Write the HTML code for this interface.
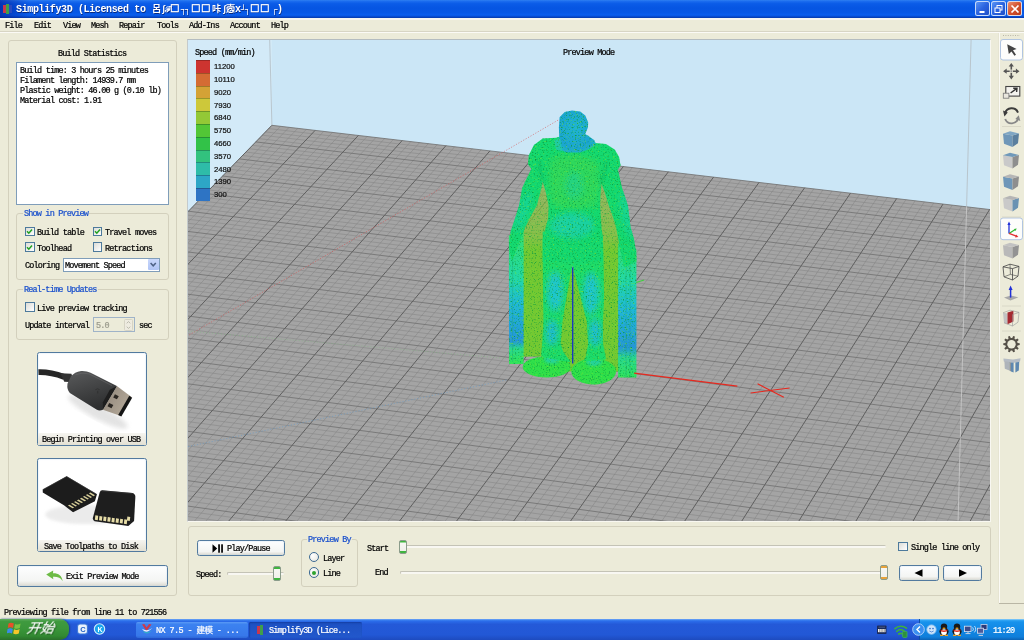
<!DOCTYPE html><html><head><meta charset="utf-8"><title>Simplify3D</title><style>
*{box-sizing:border-box;margin:0;padding:0}
html,body{width:1024px;height:640px;overflow:hidden;background:#ecebd9}
body{position:relative;font-family:"Liberation Mono","Noto Sans CJK SC",monospace;font-size:8.5px;letter-spacing:-0.83px;color:#000;line-height:10px;-webkit-text-stroke:0.22px}
.a{position:absolute}
.t{position:absolute;white-space:pre;height:10px;line-height:10px;will-change:transform}
.b{color:#1a50cc}
.gb{position:absolute;border:1px solid #d3d0bd;border-radius:3px}
.gl{will-change:transform;position:absolute;margin-top:1.2px;white-space:pre;background:#ecebd9;color:#1a50cc;height:10px;line-height:10px;padding:0 1px}
.cb{position:absolute;width:9.6px;height:9.6px;margin-top:-0.8px;border:1px solid #4d7a9c;background:linear-gradient(135deg,#dcdcd7,#fff)}
.btn{position:absolute;border:1px solid #527a9f;border-radius:2.5px;background:linear-gradient(#fdfeff,#f4f5f3 75%,#dcdad0);box-shadow:inset 0 0 1.5px #b9cfe6}
.sans{font-family:"Liberation Sans",sans-serif;letter-spacing:0}
</style></head><body>
<div class="a" style="left:0;top:0;width:1024px;height:18.4px;background:linear-gradient(#2f80f2 0%,#1a6bee 8%,#0b5ce8 20%,#0655e2 45%,#0758e6 70%,#0a5eee 84%,#0747c8 94%,#0538a8 100%)"></div>
<div class="a" style="left:0;top:0;width:30px;height:18.4px;background:linear-gradient(90deg,rgba(0,20,140,.55),rgba(0,20,140,0))"></div>
<svg class="a" style="left:2px;top:3px" width="12" height="12" viewBox="0 0 12 12"><rect x="1" y="2" width="3" height="8" fill="#c8384e"/><rect x="4" y="1" width="3" height="10" fill="#3f9f4a"/><rect x="7" y="2" width="3" height="8" fill="#2a4ac0"/></svg>
<div class="t" style="left:16px;top:4px;height:12px;line-height:12px;font-size:10px;font-weight:bold;letter-spacing:-0.37px;color:#fff;text-shadow:0.5px 0.5px 0 #0a2a80;-webkit-text-stroke:0">Simplify3D (Licensed to</div>
<div class="t" style="left:152.2px;top:4px;height:12px;line-height:12px;font-size:10px;font-weight:bold;letter-spacing:-0.37px;color:#fff;text-shadow:0.5px 0.5px 0 #0a2a80;-webkit-text-stroke:0;font-size:9.2px;letter-spacing:0">呂</div>
<div class="t" style="left:161.2px;top:4px;height:12px;line-height:12px;font-size:10px;font-weight:bold;letter-spacing:-0.37px;color:#fff;text-shadow:0.5px 0.5px 0 #0a2a80;-webkit-text-stroke:0;font-size:9px;letter-spacing:0">ʃ</div>
<div class="t" style="left:164.5px;top:4px;height:12px;line-height:12px;font-size:10px;font-weight:bold;letter-spacing:-0.37px;color:#fff;text-shadow:0.5px 0.5px 0 #0a2a80;-webkit-text-stroke:0;font-size:8px;letter-spacing:0">ℱ</div>
<div class="t" style="left:171.3px;top:4px;height:12px;line-height:12px;font-size:10px;font-weight:bold;letter-spacing:-0.37px;color:#fff;text-shadow:0.5px 0.5px 0 #0a2a80;-webkit-text-stroke:0;font-size:9.2px;letter-spacing:0;font-size:12.4px;margin-top:-0.6px;margin-left:-0.6px;font-weight:normal;-webkit-text-stroke:0.45px #fff">□</div>
<div class="t" style="left:180.6px;top:4px;height:12px;line-height:12px;font-size:10px;font-weight:bold;letter-spacing:-0.37px;color:#fff;text-shadow:0.5px 0.5px 0 #0a2a80;-webkit-text-stroke:0;font-size:9.6px;letter-spacing:0">┐</div>
<div class="t" style="left:185.2px;top:4px;height:12px;line-height:12px;font-size:10px;font-weight:bold;letter-spacing:-0.37px;color:#fff;text-shadow:0.5px 0.5px 0 #0a2a80;-webkit-text-stroke:0;font-size:9.6px;letter-spacing:0">┐</div>
<div class="t" style="left:193px;top:4px;height:12px;line-height:12px;font-size:10px;font-weight:bold;letter-spacing:-0.37px;color:#fff;text-shadow:0.5px 0.5px 0 #0a2a80;-webkit-text-stroke:0;font-size:9.2px;letter-spacing:0;font-size:12.4px;margin-top:-0.6px;margin-left:-0.6px;font-weight:normal;-webkit-text-stroke:0.45px #fff">□</div>
<div class="t" style="left:202.2px;top:4px;height:12px;line-height:12px;font-size:10px;font-weight:bold;letter-spacing:-0.37px;color:#fff;text-shadow:0.5px 0.5px 0 #0a2a80;-webkit-text-stroke:0;font-size:9.2px;letter-spacing:0;font-size:12.4px;margin-top:-0.6px;margin-left:-0.6px;font-weight:normal;-webkit-text-stroke:0.45px #fff">□</div>
<div class="t" style="left:212px;top:4px;height:12px;line-height:12px;font-size:10px;font-weight:bold;letter-spacing:-0.37px;color:#fff;text-shadow:0.5px 0.5px 0 #0a2a80;-webkit-text-stroke:0;font-size:9.2px;letter-spacing:0">咔</div>
<div class="t" style="left:221.6px;top:4px;height:12px;line-height:12px;font-size:10px;font-weight:bold;letter-spacing:-0.37px;color:#fff;text-shadow:0.5px 0.5px 0 #0a2a80;-webkit-text-stroke:0;font-size:9px;letter-spacing:0">ʃ</div>
<div class="t" style="left:225.6px;top:4px;height:12px;line-height:12px;font-size:10px;font-weight:bold;letter-spacing:-0.37px;color:#fff;text-shadow:0.5px 0.5px 0 #0a2a80;-webkit-text-stroke:0;font-size:9.2px;letter-spacing:0">悫</div>
<div class="t" style="left:234.8px;top:4px;height:12px;line-height:12px;font-size:10px;font-weight:bold;letter-spacing:-0.37px;color:#fff;text-shadow:0.5px 0.5px 0 #0a2a80;-webkit-text-stroke:0;font-size:10px;letter-spacing:0">x</div>
<div class="t" style="left:240.8px;top:4px;height:12px;line-height:12px;font-size:10px;font-weight:bold;letter-spacing:-0.37px;color:#fff;text-shadow:0.5px 0.5px 0 #0a2a80;-webkit-text-stroke:0;font-size:9.6px;letter-spacing:0">┘</div>
<div class="t" style="left:245.4px;top:4px;height:12px;line-height:12px;font-size:10px;font-weight:bold;letter-spacing:-0.37px;color:#fff;text-shadow:0.5px 0.5px 0 #0a2a80;-webkit-text-stroke:0;font-size:9.6px;letter-spacing:0">┐</div>
<div class="t" style="left:252px;top:4px;height:12px;line-height:12px;font-size:10px;font-weight:bold;letter-spacing:-0.37px;color:#fff;text-shadow:0.5px 0.5px 0 #0a2a80;-webkit-text-stroke:0;font-size:9.2px;letter-spacing:0;font-size:12.4px;margin-top:-0.6px;margin-left:-0.6px;font-weight:normal;-webkit-text-stroke:0.45px #fff">□</div>
<div class="t" style="left:261.2px;top:4px;height:12px;line-height:12px;font-size:10px;font-weight:bold;letter-spacing:-0.37px;color:#fff;text-shadow:0.5px 0.5px 0 #0a2a80;-webkit-text-stroke:0;font-size:9.2px;letter-spacing:0;font-size:12.4px;margin-top:-0.6px;margin-left:-0.6px;font-weight:normal;-webkit-text-stroke:0.45px #fff">□</div>
<div class="t" style="left:271.6px;top:4px;height:12px;line-height:12px;font-size:10px;font-weight:bold;letter-spacing:-0.37px;color:#fff;text-shadow:0.5px 0.5px 0 #0a2a80;-webkit-text-stroke:0;font-size:9.6px;letter-spacing:0">┌</div>
<div class="t" style="left:277px;top:4px;height:12px;line-height:12px;font-size:10px;font-weight:bold;letter-spacing:-0.37px;color:#fff;text-shadow:0.5px 0.5px 0 #0a2a80;-webkit-text-stroke:0;font-size:10px;letter-spacing:0">)</div>
<div class="a" style="left:975.2px;top:1.4px;width:14.8px;height:15px;border:1px solid rgba(225,238,255,.85);border-radius:2.5px;background:linear-gradient(135deg,#5b95f5,#2a63df 50%,#1e4ec8)"></div>
<div class="a" style="left:991.2px;top:1.4px;width:14.8px;height:15px;border:1px solid rgba(225,238,255,.85);border-radius:2.5px;background:linear-gradient(135deg,#5b95f5,#2a63df 50%,#1e4ec8)"></div>
<div class="a" style="left:1007.2px;top:1.4px;width:14.8px;height:15px;border:1px solid rgba(225,238,255,.85);border-radius:2.5px;background:linear-gradient(135deg,#ea9072,#d4522e 50%,#b83c1c)"></div>
<svg class="a" style="left:975.6px;top:1.9px" width="46" height="14" viewBox="0 0 46 14"><rect x="3.5" y="9" width="5" height="2" fill="#fff"/><rect x="21" y="3.5" width="5" height="4.5" fill="none" stroke="#fff" stroke-width="1"/><rect x="19" y="6" width="5" height="4.5" fill="#2a63df" stroke="#fff" stroke-width="1"/><path d="M35.5 3.5 L42.5 10.5 M42.5 3.5 L35.5 10.5" stroke="#fff" stroke-width="1.7"/></svg>
<div class="a" style="left:0;top:18.4px;width:1024px;height:1.2px;background:#f7f6ef"></div>
<div class="t " style="left:5px;top:21.1px;">File</div>
<div class="t " style="left:34px;top:21.1px;">Edit</div>
<div class="t " style="left:62.5px;top:21.1px;">View</div>
<div class="t " style="left:91px;top:21.1px;">Mesh</div>
<div class="t " style="left:119px;top:21.1px;">Repair</div>
<div class="t " style="left:156.5px;top:21.1px;">Tools</div>
<div class="t " style="left:189px;top:21.1px;">Add-Ins</div>
<div class="t " style="left:230px;top:21.1px;">Account</div>
<div class="t " style="left:271px;top:21.1px;">Help</div>
<div class="a" style="left:0;top:31px;width:1024px;height:1px;background:#d8d5c4"></div>
<div class="a" style="left:0;top:32px;width:1024px;height:1px;background:#fbfaf5"></div>
<div class="gb" style="left:8.4px;top:40px;width:168.8px;height:556px"></div>
<div class="t " style="left:58px;top:48.9px;">Build Statistics</div>
<div class="a" style="left:15.9px;top:62px;width:152.7px;height:142.5px;background:#fff;border:1px solid #7f9db9"></div>
<div class="t " style="left:19.5px;top:66.2px;">Build time: 3 hours 25 minutes</div>
<div class="t " style="left:19.5px;top:76.2px;">Filament length: 14939.7 mm</div>
<div class="t " style="left:19.5px;top:86.2px;">Plastic weight: 46.00 g (0.10 lb)</div>
<div class="t " style="left:19.5px;top:96.2px;">Material cost: 1.91</div>
<div class="gb" style="left:16.3px;top:213px;width:153.2px;height:67px"></div>
<div class="gl" style="left:23px;top:208px">Show in Preview</div>
<div class="cb" style="left:25px;top:227.5px"></div>
<svg class="a" style="left:25.3px;top:227.0px" width="9" height="9" viewBox="0 0 9 9"><path d="M2 4.2 L3.8 6.2 L7 2.4" fill="none" stroke="#21a121" stroke-width="1.5"/></svg>
<div class="t " style="left:37.3px;top:228.1px;">Build table</div>
<div class="cb" style="left:92.5px;top:227.5px"></div>
<svg class="a" style="left:92.8px;top:227.0px" width="9" height="9" viewBox="0 0 9 9"><path d="M2 4.2 L3.8 6.2 L7 2.4" fill="none" stroke="#21a121" stroke-width="1.5"/></svg>
<div class="t " style="left:104.8px;top:228.1px;">Travel moves</div>
<div class="cb" style="left:25px;top:243px"></div>
<svg class="a" style="left:25.3px;top:242.5px" width="9" height="9" viewBox="0 0 9 9"><path d="M2 4.2 L3.8 6.2 L7 2.4" fill="none" stroke="#21a121" stroke-width="1.5"/></svg>
<div class="t " style="left:37.3px;top:243.6px;">Toolhead</div>
<div class="cb" style="left:92.5px;top:243px"></div>
<div class="t " style="left:104.8px;top:243.6px;">Retractions</div>
<div class="t " style="left:25px;top:261.1px;">Coloring</div>
<div class="a" style="left:63px;top:257.5px;width:96.6px;height:14.2px;background:#fff;border:1px solid #7f9db9"></div>
<div class="t " style="left:65px;top:261.1px;">Movement Speed</div>
<div class="a" style="left:148.2px;top:259px;width:10.5px;height:11.2px;background:linear-gradient(#c9d7fb,#b0c4f5);border-radius:1px"></div>
<svg class="a" style="left:148.2px;top:259px" width="10.5" height="11" viewBox="0 0 10.5 11"><path d="M2.6 4 L5.2 6.8 L7.8 4" fill="none" stroke="#4d6185" stroke-width="1.5"/></svg>
<div class="gb" style="left:16.3px;top:289px;width:153.2px;height:50.5px"></div>
<div class="gl" style="left:23px;top:284px">Real-time Updates</div>
<div class="cb" style="left:25px;top:302.8px"></div>
<div class="t " style="left:37.3px;top:303.6px;">Live preview tracking</div>
<div class="t " style="left:25px;top:320.6px;">Update interval</div>
<div class="a" style="left:93px;top:317px;width:42px;height:14.5px;background:#ecebd9;border:1px solid #9fb3c8"></div>
<div class="t " style="left:95.5px;top:320.6px;color:#9a9a8c">5.0</div>
<svg class="a" style="left:124px;top:318.5px" width="9" height="12" viewBox="0 0 9 12"><rect x="0.5" y="0.5" width="8" height="11" rx="1" fill="#eeebe0" stroke="#d6d3c4"/><path d="M2.7 4.3 L4.5 2.6 L6.3 4.3 M2.7 7.7 L4.5 9.4 L6.3 7.7" fill="none" stroke="#b5b5a8" stroke-width="0.9"/></svg>
<div class="t " style="left:139px;top:320.6px;">sec</div>
<div class="btn" style="left:36.8px;top:351.6px;width:110.2px;height:94.6px;background:#fff"></div>
<svg class="a" style="left:34px;top:348px" width="120" height="102" viewBox="0 0 753 640"><defs><linearGradient id="ub" x1="0" y1="0" x2="0.4" y2="1"><stop offset="0" stop-color="#5a5b5c"/><stop offset="0.5" stop-color="#444546"/><stop offset="1" stop-color="#2e2f30"/></linearGradient>
<linearGradient id="um" x1="0" y1="0" x2="1" y2="0.6"><stop offset="0" stop-color="#8c8378"/><stop offset="0.6" stop-color="#a59a8c"/><stop offset="1" stop-color="#b5aa9a"/></linearGradient>
<filter id="ubl"><feGaussianBlur stdDeviation="14"/></filter></defs><ellipse cx="400" cy="400" rx="210" ry="45" fill="#d8d8d8" opacity="0.7" filter="url(#ubl)" transform="rotate(28 400 400)"/><path d="M28 152 C90 150 130 160 190 182" stroke="#262626" stroke-width="36" fill="none" stroke-linecap="butt"/><path d="M165 158 L235 162 L250 215 L190 212Z" fill="#333"/><path d="M232 178 Q255 150 295 144 Q330 142 355 155 L520 238 L432 388 Q410 396 392 386 L225 282 Q205 262 210 225 Z" fill="url(#ub)"/><path d="M260 168 Q300 150 345 162 L490 236" stroke="#6c6d6e" stroke-width="5" fill="none" opacity="0.7"/><path d="M385 262 Q398 250 412 262 M400 268 V285" stroke="#2a2a2a" stroke-width="4" fill="none"/><path d="M520 238 L612 308 L545 426 L432 388 Z" fill="url(#um)"/><path d="M520 238 L476 262 L432 340 L432 388Z" fill="#1e1e1e"/><path d="M598 300 L616 312 L548 430 L528 420Z" fill="#151515"/><path d="M508 290 L532 302 L520 322 L497 310Z M472 345 L498 357 L486 378 L461 366Z" fill="#2a2622"/></svg>
<div class="a" style="left:37.8px;top:433px;width:108.2px;height:12.2px;background:linear-gradient(#f6f5f0,#e3e0d2)"></div>
<div class="t " style="left:42.4px;top:435.4px;">Begin Printing over USB</div>
<div class="btn" style="left:36.8px;top:458px;width:110.2px;height:94.3px;background:#fff"></div>
<svg class="a" style="left:34px;top:454px" width="120" height="102" viewBox="0 0 753 640"><defs><filter id="sbl"><feGaussianBlur stdDeviation="10"/></filter></defs><ellipse cx="330" cy="380" rx="260" ry="60" fill="#dcdcdc" opacity="0.55" filter="url(#sbl)"/><path d="M55 222 L205 140 L395 252 L382 296 L245 366 L212 340 L188 322 L55 242Z" fill="#1c1c1c"/><path d="M55 224 L205 142 L392 252" stroke="#3a3a3a" stroke-width="4" fill="none"/><path d="M242 341 L252 335 L223 318 L213 323Z" fill="#d8cf9a"/><path d="M261 330 L270 324 L241 307 L232 312Z" fill="#d8cf9a"/><path d="M280 319 L289 314 L260 296 L251 301Z" fill="#d8cf9a"/><path d="M298 308 L308 303 L279 285 L269 291Z" fill="#d8cf9a"/><path d="M317 297 L327 292 L298 274 L288 280Z" fill="#d8cf9a"/><path d="M336 286 L345 281 L316 263 L307 269Z" fill="#d8cf9a"/><path d="M355 276 L364 270 L335 253 L325 258Z" fill="#d8cf9a"/><path d="M373 265 L383 259 L354 242 L344 247Z" fill="#d8cf9a"/><path d="M428 228 L618 244 Q636 250 636 268 L628 420 L592 452 L380 422 Q366 416 370 398 L412 242 Q416 228 428 228Z" fill="#1e1e1e"/><path d="M426 232 L618 248" stroke="#3c3c3c" stroke-width="4" fill="none"/><path d="M385 385.0 L403 388.0 L400 415.0 L382 412.0Z" fill="#e6dca6"/><path d="M411 388.6 L429 391.6 L426 418.6 L408 415.6Z" fill="#e6dca6"/><path d="M437 392.2 L455 395.2 L452 422.2 L434 419.2Z" fill="#e6dca6"/><path d="M463 395.8 L481 398.8 L478 425.8 L460 422.8Z" fill="#e6dca6"/><path d="M489 399.4 L507 402.4 L504 429.4 L486 426.4Z" fill="#e6dca6"/><path d="M515 403.0 L533 406.0 L530 433.0 L512 430.0Z" fill="#e6dca6"/><path d="M541 406.6 L559 409.6 L556 436.6 L538 433.6Z" fill="#e6dca6"/><path d="M567 410.2 L585 413.2 L582 440.2 L564 437.2Z" fill="#e6dca6"/><path d="M586 392 L604 395 L601 420 L583 417Z" fill="#e6dca6"/></svg>
<div class="a" style="left:37.8px;top:539.5px;width:108.2px;height:11.8px;background:linear-gradient(#f6f5f0,#e3e0d2)"></div>
<div class="t " style="left:44px;top:541.9px;">Save Toolpaths to Disk</div>
<div class="btn" style="left:17px;top:565px;width:151px;height:22px"></div>
<svg class="a" style="left:45px;top:569px" width="20" height="14" viewBox="0 0 20 14"><path d="M1.2 5.4 L8.2 1.4 L8 4.3 C13.5 4.2 17 6.8 17.6 12.2 C15.6 8.6 12.6 7.6 8 7.8 L8.3 10.2 Z" fill="#6cbb45"/></svg>
<div class="t " style="left:66px;top:572.1px;">Exit Preview Mode</div>
<div class="t " style="left:4px;top:608.1px;">Previewing file from line 11 to 721556</div>
<div class="gb" style="left:188.2px;top:526px;width:803px;height:69.5px"></div>
<div class="btn" style="left:196.8px;top:540px;width:88.2px;height:16px"></div>
<svg class="a" style="left:212px;top:543.5px" width="12" height="9" viewBox="0 0 12 9"><path d="M0.5 0.3 L5.2 4.5 L0.5 8.7 Z" fill="#000"/><rect x="6.2" y="0.3" width="1.7" height="8.4" fill="#000"/><rect x="9.2" y="0.3" width="1.7" height="8.4" fill="#000"/></svg>
<div class="t " style="left:226.5px;top:544.1px;">Play/Pause</div>
<div class="t " style="left:195.5px;top:570.1px;">Speed:</div>
<div class="a" style="left:226.5px;top:571.6px;width:57.5px;height:3px;border-radius:1.5px;background:#f8f7f2;border-top:1px solid #c4c3b6;border-left:1px solid #c4c3b6"></div>
<div class="a" style="left:273px;top:566.4px;width:8px;height:14.5px;border-radius:2px;border:1px solid #8b9c8b;background:linear-gradient(#3fb53f 0,#3fb53f 12%,#f7f7f3 13%,#f0f0ea 86%,#3fb53f 87%)"></div>
<div class="gb" style="left:300.6px;top:539px;width:57.8px;height:48px"></div>
<div class="gl" style="left:306.6px;top:534px">Preview By</div>
<div class="a" style="left:308.7px;top:552.1px;width:10.2px;height:10.2px;border-radius:50%;border:1px solid #3d6a94;background:radial-gradient(circle at 35% 35%,#fff,#e4e4dc)"></div>
<div class="t " style="left:323px;top:553.6px;">Layer</div>
<div class="a" style="left:308.7px;top:567.4px;width:10.2px;height:10.2px;border-radius:50%;border:1px solid #3d6a94;background:radial-gradient(circle at 35% 35%,#fff,#e4e4dc)"></div>
<div class="a" style="left:311.8px;top:570.5px;width:4px;height:4px;border-radius:50%;background:#2fa32f"></div>
<div class="t " style="left:323px;top:568.6px;">Line</div>
<div class="t " style="left:366.5px;top:543.6px;">Start</div>
<div class="t " style="left:375px;top:568.3px;">End</div>
<div class="a" style="left:400px;top:545.3px;width:486px;height:3px;border-radius:1.5px;background:#f8f7f2;border-top:1px solid #c4c3b6;border-left:1px solid #c4c3b6"></div>
<div class="a" style="left:399px;top:539.8px;width:8px;height:14.5px;border-radius:2px;border:1px solid #8b9c8b;background:linear-gradient(#3fb53f 0,#3fb53f 12%,#f7f7f3 13%,#f0f0ea 86%,#3fb53f 87%)"></div>
<div class="a" style="left:400px;top:571px;width:486px;height:3px;border-radius:1.5px;background:#f8f7f2;border-top:1px solid #c4c3b6;border-left:1px solid #c4c3b6"></div>
<div class="a" style="left:879.5px;top:565px;width:8px;height:14.5px;border-radius:2px;border:1px solid #8b9c8b;background:linear-gradient(#e8a33a 0,#e8a33a 12%,#f7f7f3 13%,#f0f0ea 86%,#e8a33a 87%)"></div>
<div class="cb" style="left:898px;top:542.3px"></div>
<div class="t " style="left:911px;top:543.1px;">Single line only</div>
<div class="btn" style="left:899px;top:564.5px;width:39.5px;height:16px"></div>
<div class="btn" style="left:943px;top:564.5px;width:39px;height:16px"></div>
<svg class="a" style="left:899px;top:564.5px" width="84" height="16" viewBox="0 0 84 16"><path d="M23.5 4.2 L23.5 11.8 L15.5 8 Z M60 4.2 L60 11.8 L68 8 Z" fill="#000"/></svg>
<div class="a" style="left:999px;top:33px;width:1px;height:570px;background:#fbfaf5"></div>
<div class="a" style="left:998px;top:33px;width:1px;height:570px;background:#e6e4d2"></div>
<div class="a" style="left:999px;top:602.6px;width:25px;height:1px;background:#b9b6a5"></div>
<svg class="a" style="left:999px;top:33px" width="25" height="350" viewBox="999 33 25 350"><path d="M1003 35.5H1020" stroke="#b9b6a6" stroke-width="1" stroke-dasharray="1 1.4"/><rect x="1000.5" y="39.5" width="22" height="20.5" rx="2.5" fill="#fdfdfb" stroke="#a9bfe0" stroke-width="0.9"/><rect x="1000.5" y="218" width="22" height="21.69999999999999" rx="2.5" fill="#fdfdfb" stroke="#a9bfe0" stroke-width="0.9"/><path d="M1007.2 44.2 L1016.6 49 L1013 50.3 L1016 54.8 L1014.4 55.8 L1011.5 51.4 L1008.8 54Z" fill="#444"/><g transform="translate(1011.3,71.2)" fill="#555" stroke="none"><path d="M0 -8.2 L2.6 -4.6 H0.8 V-0.8 H4.6 V-2.6 L8.2 0 L4.6 2.6 V0.8 H0.8 V4.6 H2.6 L0 8.2 L-2.6 4.6 H-0.8 V0.8 H-4.6 V2.6 L-8.2 0 L-4.6 -2.6 V-0.8 H-0.8 V-4.6 H-2.6Z"/><rect x="-1.6" y="-1.6" width="3.2" height="3.2" fill="#ecebd9"/><rect x="-0.9" y="-0.9" width="1.8" height="1.8" fill="#999"/></g><rect x="1005.8" y="86.5" width="14" height="9.6" fill="#f4f3ee" stroke="#444" stroke-width="1.1"/><rect x="1003.3" y="93.2" width="5.6" height="5" fill="#e9e7de" stroke="#777" stroke-width="0.8"/><path d="M1010.6 93 L1016.5 88.6 M1013.2 88.3 L1017 88.2 L1016.6 92" stroke="#333" stroke-width="1.4" fill="none"/><g fill="none" stroke-width="1.9"><path d="M1005 113.5 A6.8 6.8 0 0 1 1018 112.6" stroke="#3c3c3c"/><path d="M1018.2 118 A6.8 6.8 0 0 1 1005.2 119" stroke="#888"/></g><path d="M1003 110.6 L1007.8 112.6 L1004.4 116.4Z" fill="#3c3c3c"/><path d="M1020.3 121 L1015.4 119 L1018.8 115.2Z" fill="#888"/><path d="M1002 126.5H1021" stroke="#d6d3c3" stroke-width="0.8"/><path d="M1002 217H1021" stroke="#d6d3c3" stroke-width="0.8"/><path d="M1002 306H1021" stroke="#d6d3c3" stroke-width="0.8"/><path d="M1002 331H1021" stroke="#d6d3c3" stroke-width="0.8"/><path d="M1003 133.8 L1012.5 135.6 L1012.5 147 L1004 143.8Z" fill="#6f97b8"/><path d="M1012.5 135.6 L1019 133.4 L1018 143.2 L1012.5 147Z" fill="#5b7f9e"/><path d="M1003 133.8 L1010 131.2 L1019 133.4 L1012.5 135.6Z" fill="#7fa6c4"/><path d="M1003 155.3 L1012.5 157.1 L1012.5 168.5 L1004 165.3Z" fill="#c9c9c9"/><path d="M1012.5 157.1 L1019 154.9 L1018 164.7 L1012.5 168.5Z" fill="#8e8e8e"/><path d="M1003 155.3 L1010 152.7 L1019 154.9 L1012.5 157.1Z" fill="#7099ba"/><path d="M1003 176.8 L1012.5 178.6 L1012.5 190 L1004 186.8Z" fill="#6f97b8"/><path d="M1012.5 178.6 L1019 176.4 L1018 186.2 L1012.5 190Z" fill="#8e8e8e"/><path d="M1003 176.8 L1010 174.2 L1019 176.4 L1012.5 178.6Z" fill="#b5b5b5"/><path d="M1003 198.3 L1012.5 200.1 L1012.5 211.5 L1004 208.3Z" fill="#c9c9c9"/><path d="M1012.5 200.1 L1019 197.9 L1018 207.7 L1012.5 211.5Z" fill="#6a92b3"/><path d="M1003 198.3 L1010 195.7 L1019 197.9 L1012.5 200.1Z" fill="#b5b5b5"/><path d="M1009 233.4V223.5" stroke="#2030d8" stroke-width="1.3"/><path d="M1009 221.6 L1010.6 225 H1007.4Z" fill="#2030d8"/><path d="M1009 233.4 L1015.6 229.2" stroke="#2fb82f" stroke-width="1.2"/><path d="M1009 233.4 L1017 236.4" stroke="#e03030" stroke-width="1.2"/><path d="M1018.4 236.9 L1015.2 237.4 L1016 234.6Z" fill="#e03030"/><path d="M1016.8 228.4 L1014 229 L1015.4 231Z" fill="#2fb82f"/><path d="M1003 245.3 L1012.5 247.1 L1012.5 258.5 L1004 255.3Z" fill="#b9b9b9"/><path d="M1012.5 247.1 L1019 244.9 L1018 254.7 L1012.5 258.5Z" fill="#939393"/><path d="M1003 245.3 L1010 242.7 L1019 244.9 L1012.5 247.1Z" fill="#c2c2c2"/><g fill="none" stroke="#444" stroke-width="0.8"><path d="M1003 266.8 L1012.5 268.6 L1012.5 280 L1004 276.8Z"/><path d="M1012.5 268.6 L1019 266.4 L1018 276.2 L1012.5 280"/><path d="M1003 266.8 L1010 264.2 L1019 266.4"/><path d="M1010 264.2 L1010.4 274.4 L1004 276.8 M1010.4 274.4 L1018 276.2" stroke-width="0.6"/></g><path d="M1004 297.6 L1011 295.4 L1018.4 297.4 L1010.4 300.4Z" fill="#a8a8a8"/><path d="M1010.6 297.6V289" stroke="#2030d8" stroke-width="1.5"/><path d="M1010.6 285.6 L1012.6 290 H1008.6Z" fill="#2030d8"/><path d="M1003 312.8 L1007.5 313.6 L1007.5 324.2 L1004 322.8Z" fill="#c2c2c2"/><path d="M1007.5 312.4 L1013.4 310.8 L1013.4 321.6 L1007.5 324.2Z" fill="#a52a32"/><g fill="none" stroke="#999" stroke-width="0.6"><path d="M1003 312.8 L1010 310.2 L1019 312.4 L1018 322.2 L1012.5 326 L1004 322.8"/><path d="M1012.5 314.6 L1019 312.4 M1012.5 314.6 L1012.5 326"/></g><polygon points="1019.7,343.3 1019.7,345.1 1017.6,345.4 1017.1,346.8 1018.7,348.3 1017.6,349.8 1015.7,348.8 1014.5,349.6 1014.9,351.8 1013.2,352.3 1012.2,350.4 1010.8,350.4 1009.8,352.3 1008.1,351.8 1008.5,349.6 1007.3,348.8 1005.4,349.8 1004.3,348.3 1005.9,346.8 1005.4,345.4 1003.3,345.1 1003.3,343.3 1005.4,343.0 1005.9,341.6 1004.3,340.1 1005.4,338.6 1007.3,339.6 1008.5,338.8 1008.1,336.6 1009.8,336.1 1010.8,338.0 1012.2,338.0 1013.2,336.1 1014.9,336.6 1014.5,338.8 1015.7,339.6 1017.6,338.6 1018.7,340.1 1017.1,341.6 1017.6,343.0" fill="#555048"/><circle cx="1011.5" cy="344.2" r="4.2" fill="#ecebd9"/><path d="M1003.4 358.6 L1013 359.6 L1020.6 358.2 L1020 361.6 L1013 363 L1003.8 361.6Z" fill="#b5bcc4"/><path d="M1004.4 361 L1009.4 362 V370.4 L1004.8 368.8Z" fill="#aeb4ba"/><path d="M1011 362.6 L1013.6 362.8 V372.4 L1011 371.6Z" fill="#5f88b0"/><path d="M1015.4 362.6 L1019.2 361.8 L1018.8 370.6 L1015.4 372.4Z" fill="#5f88b0"/><path d="M1009.4 362 L1011 362.6 V371.6 L1009.4 370.4Z" fill="#8d949a"/></svg>
<div class="a" style="left:0;top:618.5px;width:1024px;height:21.5px;background:linear-gradient(#7fb0f6 0,#3a80f0 5%,#2a6ae8 12%,#2459d8 25%,#2258d6 75%,#1d4bbf 100%)"></div>
<div class="a" style="left:918.5px;top:618.5px;width:105.5px;height:21.5px;background:linear-gradient(#a8d8fa 0,#35a8f5 5%,#1792ec 14%,#1187e4 50%,#0f7fdb 85%,#0c62b4 100%);border-left:1px solid #0d4fa8"></div>
<div class="a" style="left:0;top:618.5px;width:69px;height:21.5px;border-radius:0 9px 9px 0;background:linear-gradient(#5cab5c 0,#3f9a3f 12%,#3a963a 45%,#328a32 80%,#2a6f2a 100%);box-shadow:1px 0 2px #1a3f8a"></div>
<svg class="a" style="left:7px;top:621px" width="16" height="15" viewBox="0 0 16 15"><path d="M1.5 2.5 Q4 1 6.8 2.6 L6 7 Q3.6 5.6 0.8 7 Z" fill="#e8502a"/><path d="M8 2.9 Q10.8 4.2 13.6 2.6 L12.8 7 Q10 8.4 7.2 7.2 Z" fill="#7cc243"/><path d="M0.6 8 Q3.4 6.6 5.8 8 L5 12.4 Q2.4 11 -0.2 12.4 Z" fill="#3b8be8"/><path d="M7 8.3 Q9.8 9.6 12.6 8 L11.8 12.4 Q9 13.8 6.2 12.6 Z" fill="#f4c62a"/></svg>
<div class="t" style="left:27px;top:621px;height:16px;line-height:16px;font-size:13.5px;font-style:italic;letter-spacing:0;color:#fff;font-family:'Liberation Sans','Noto Sans CJK SC',sans-serif;text-shadow:1px 1px 1px #1a4a1a;transform:skewX(-10deg)">开始</div>
<svg class="a" style="left:76px;top:622px" width="36" height="14" viewBox="0 0 36 14"><rect x="1.5" y="2" width="10" height="10" rx="2.5" fill="#e9f1fb" stroke="#3d78d8" stroke-width="1.2"/><text x="6.5" y="10" font-size="7.5" font-weight="bold" text-anchor="middle" fill="#1e5fc4" font-family="Liberation Sans,sans-serif">C</text><circle cx="23.5" cy="7" r="5.2" fill="#19a5ee" stroke="#d8eefc" stroke-width="1.1"/><text x="23.5" y="9.6" font-size="7" font-weight="bold" text-anchor="middle" fill="#fff" font-family="Liberation Sans,sans-serif">K</text></svg>
<div class="a" style="left:136px;top:621.5px;width:111.5px;height:16.5px;border-radius:2px;background:linear-gradient(#5a9af5 0,#3c82f0 15%,#3778ea 85%,#2e68d8 100%)"></div>
<div class="a" style="left:249px;top:621.5px;width:113px;height:16.5px;border-radius:2px;background:linear-gradient(#1a49b8 0,#1e52c4 20%,#2258cc 100%);box-shadow:inset 0.5px 0.5px 1px #123a9a"></div>
<svg class="a" style="left:141px;top:623px" width="12" height="13" viewBox="0 0 12 13"><path d="M1 1.5 L5.5 8 L10.5 1.5 L8 1 L5.6 4.4 L3.4 1 Z" fill="#d03a4a"/><path d="M1.5 8 Q5.5 13 11 7.5 Q6 10.5 1.5 8 Z" fill="#2fb0c8"/><path d="M0.8 5.8 Q5 12 11.3 5 Q6 9 0.8 5.8Z" fill="#e8eef8"/></svg>
<div class="t " style="left:156px;top:626.1px;color:#fff;letter-spacing:-0.6px">NX 7.5 - 建模 - ...</div>
<svg class="a" style="left:255.5px;top:623.5px" width="12" height="12" viewBox="0 0 12 12"><rect x="1" y="2" width="3" height="8" fill="#c8384e"/><rect x="4" y="1" width="3" height="10" fill="#3f9f4a"/><rect x="7" y="2" width="3" height="8" fill="#2a4ac0"/></svg>
<div class="t " style="left:269px;top:626.1px;color:#fff">Simplify3D (Lice...</div>
<svg class="a" style="left:870px;top:618px" width="125" height="22" viewBox="870 618 125 22"><rect x="877" y="625.5" width="9.5" height="8.5" rx="0.8" fill="#1a2a5a"/><rect x="878" y="629" width="7.5" height="3.2" fill="#f0f0f0"/><path d="M878.5 627.2H885" stroke="#5a6a9a" stroke-width="0.8"/><path d="M879.6 629V632.2 M881.2 629V632.2 M882.8 629V632.2 M884.4 629V632.2" stroke="#555" stroke-width="0.5"/><g fill="none" stroke="#3fae3f" stroke-width="1.7" stroke-linecap="round"><path d="M895 628.6 A8.6 8.6 0 0 1 906.4 628.2"/><path d="M896.8 631.4 A5.6 5.6 0 0 1 904 631"/><path d="M898.8 634 A2.6 2.6 0 0 1 901.6 633.6"/></g><rect x="902.6" y="631.4" width="4.4" height="6" rx="0.8" fill="#2f8f3f" stroke="#3fbe4f" stroke-width="0.7"/><circle cx="918.5" cy="629.5" r="5.8" fill="#3a8ff0" stroke="#b8d8fa" stroke-width="0.9"/><path d="M920 626.6 L917 629.5 L920 632.4" stroke="#fff" stroke-width="1.4" fill="none"/><circle cx="931.5" cy="629.6" r="4.8" fill="#cfe6fa" stroke="#6ab0ee" stroke-width="0.8"/><circle cx="930" cy="628.6" r="0.8" fill="#2a6ac8"/><circle cx="933" cy="628.6" r="0.8" fill="#2a6ac8"/><path d="M929.4 631 Q931.5 633 933.6 631" stroke="#2a6ac8" stroke-width="0.7" fill="none"/><ellipse cx="944" cy="631.6" rx="4.6" ry="4.2" fill="#1a1a1a"/><ellipse cx="944" cy="626.6" rx="3.2" ry="3.2" fill="#1a1a1a"/><ellipse cx="944" cy="632.2" rx="2.8" ry="3" fill="#fff"/><path d="M940.4 629.2 Q944 631.6 947.6 629.2 L947.2 631 Q944 633 940.8 631Z" fill="#e03020"/><ellipse cx="944" cy="628.2" rx="1.6" ry="0.8" fill="#f0a020"/><path d="M940 635.4 H943.4 M944.6 635.4 H948" stroke="#f0a020" stroke-width="1.3"/><ellipse cx="957" cy="631.6" rx="4.6" ry="4.2" fill="#1a1a1a"/><ellipse cx="957" cy="626.6" rx="3.2" ry="3.2" fill="#1a1a1a"/><ellipse cx="957" cy="632.2" rx="2.8" ry="3" fill="#fff"/><path d="M953.4 629.2 Q957 631.6 960.6 629.2 L960.2 631 Q957 633 953.8 631Z" fill="#e03020"/><ellipse cx="957" cy="628.2" rx="1.6" ry="0.8" fill="#f0a020"/><path d="M953 635.4 H956.4 M957.6 635.4 H961" stroke="#f0a020" stroke-width="1.3"/><rect x="964.5" y="626.2" width="6.5" height="5.4" fill="#3a4a8a" stroke="#d8e0f0" stroke-width="0.8"/><path d="M965.5 633.6H970.5 M968 631.6V633.6" stroke="#c8d0e0" stroke-width="1"/><path d="M972.6 627.4 A2.6 2.6 0 0 1 972.6 631 M974.4 626 A4.6 4.6 0 0 1 974.4 632.4" stroke="#e8eef8" stroke-width="0.8" fill="none"/><rect x="981" y="624.6" width="6" height="5" fill="#2a3a7a" stroke="#c8d0e8" stroke-width="0.8"/><rect x="977.6" y="628.2" width="6" height="5" fill="#4a5a9a" stroke="#d8e0f0" stroke-width="0.8"/><path d="M978.6 635.4H983" stroke="#c8d0e0" stroke-width="1"/></svg>
<div class="t " style="left:993px;top:626.1px;color:#fff">11:20</div>
<svg class="a" style="left:187.9px;top:40.4px" width="802.6" height="480.3" viewBox="0 0 802.6 480.3">
<rect width="802.6" height="480.3" fill="#cbe6f6"/>
<polygon points="0,0 83.9,0 83.9,85.3 0,171.1" fill="#d3eaf8"/>
<path d="M81.7 0L83.9 85.3" stroke="#b3bcc3" stroke-width="0.8"/>
<polygon points="83.9,85.3 1281.2,225.8 1016.0,911.8 -489.9,675.7" fill="#a4a4a4"/>
<path d="M92.5 86.3L-479.2 677.4M101.1 87.3L-468.6 679.1M109.8 88.3L-457.9 680.7M118.4 89.3L-447.3 682.4M135.7 91.4L-425.9 685.8M144.4 92.4L-415.2 687.4M153.1 93.4L-404.4 689.1M161.7 94.4L-393.7 690.8M179.1 96.5L-372.2 694.2M187.9 97.5L-361.4 695.9M196.6 98.5L-350.6 697.6M205.3 99.5L-339.8 699.3M222.8 101.6L-318.1 702.7M231.6 102.6L-307.3 704.4M240.3 103.6L-296.4 706.1M249.1 104.7L-285.5 707.8M266.7 106.7L-263.7 711.2M275.5 107.8L-252.8 712.9M284.3 108.8L-241.9 714.6M293.1 109.8L-230.9 716.3M310.8 111.9L-209.0 719.8M319.6 113.0L-198.0 721.5M328.5 114.0L-187.0 723.2M337.3 115.0L-176.0 724.9M355.1 117.1L-153.9 728.4M364.0 118.2L-142.8 730.1M372.9 119.2L-131.7 731.9M381.8 120.3L-120.6 733.6M399.6 122.3L-98.4 737.1M408.6 123.4L-87.3 738.9M417.5 124.4L-76.1 740.6M426.5 125.5L-65.0 742.3M444.4 127.6L-42.6 745.9M453.4 128.7L-31.4 747.6M462.4 129.7L-20.1 749.4M471.4 130.8L-8.9 751.1M489.4 132.9L13.6 754.7M498.4 133.9L24.9 756.4M507.5 135.0L36.2 758.2M516.5 136.1L47.5 760.0M534.6 138.2L70.2 763.5M543.7 139.3L81.5 765.3M552.8 140.3L92.9 767.1M561.9 141.4L104.3 768.9M580.1 143.5L127.1 772.5M589.2 144.6L138.5 774.2M598.3 145.7L150.0 776.0M607.5 146.7L161.5 777.8M625.8 148.9L184.4 781.4M634.9 150.0L195.9 783.2M644.1 151.0L207.5 785.1M653.3 152.1L219.0 786.9M671.7 154.3L242.1 790.5M680.9 155.4L253.7 792.3M690.1 156.4L265.3 794.1M699.4 157.5L276.9 795.9M717.9 159.7L300.2 799.6M727.1 160.8L311.9 801.4M736.4 161.9L323.5 803.2M745.7 163.0L335.2 805.1M764.3 165.1L358.7 808.8M773.6 166.2L370.4 810.6M782.9 167.3L382.2 812.4M792.2 168.4L393.9 814.3M810.9 170.6L417.5 818.0M820.3 171.7L429.3 819.8M829.7 172.8L441.2 821.7M839.0 173.9L453.0 823.5M857.8 176.1L476.8 827.3M867.2 177.2L488.7 829.1M876.6 178.3L500.6 831.0M886.1 179.4L512.5 832.9M905.0 181.7L536.4 836.6M914.4 182.8L548.4 838.5M923.9 183.9L560.4 840.4M933.4 185.0L572.4 842.3M952.3 187.2L596.5 846.0M961.8 188.3L608.6 847.9M971.4 189.4L620.6 849.8M980.9 190.6L632.7 851.7M1000.0 192.8L657.0 855.5M1009.5 193.9L669.1 857.4M1019.1 195.0L681.3 859.3M1028.7 196.2L693.4 861.2M1047.9 198.4L717.8 865.1M1057.5 199.6L730.1 867.0M1067.1 200.7L742.3 868.9M1076.7 201.8L754.6 870.8M1096.0 204.1L779.1 874.7M1105.6 205.2L791.5 876.6M1115.3 206.3L803.8 878.5M1125.0 207.5L816.1 880.5M1144.4 209.8L840.9 884.3M1154.1 210.9L853.3 886.3M1163.8 212.0L865.7 888.2M1173.5 213.2L878.1 890.2M1193.0 215.5L903.0 894.1M1202.8 216.6L915.5 896.0M1212.6 217.8L928.0 898.0M1222.3 218.9L940.5 900.0M1241.9 221.2L965.6 903.9M1251.7 222.4L978.1 905.9M1261.6 223.5L990.7 907.8M1271.4 224.7L1003.3 909.8M80.7 88.6L1279.8 229.6M77.4 91.9L1278.3 233.4M74.2 95.2L1276.8 237.2M70.9 98.6L1275.4 241.0M64.4 105.3L1272.4 248.6M61.1 108.7L1270.9 252.5M57.9 112.1L1269.4 256.4M54.6 115.5L1267.9 260.2M47.9 122.3L1264.9 268.0M44.6 125.7L1263.4 271.9M41.3 129.1L1261.9 275.9M37.9 132.6L1260.4 279.8M31.2 139.5L1257.3 287.7M27.8 143.0L1255.8 291.7M24.4 146.5L1254.2 295.7M21.0 150.0L1252.7 299.7M14.2 157.0L1249.5 307.8M10.7 160.6L1248.0 311.8M7.3 164.1L1246.4 315.9M3.8 167.7L1244.8 319.9M-3.1 174.8L1241.7 328.1M-6.6 178.4L1240.1 332.3M-10.1 182.0L1238.5 336.4M-13.6 185.6L1236.9 340.5M-20.7 192.9L1233.6 348.9M-24.2 196.6L1232.0 353.1M-27.8 200.2L1230.4 357.3M-31.4 203.9L1228.8 361.5M-38.6 211.3L1225.5 370.0M-42.2 215.0L1223.8 374.3M-45.8 218.7L1222.2 378.5M-49.4 222.5L1220.5 382.8M-56.7 230.0L1217.2 391.5M-60.4 233.7L1215.5 395.8M-64.1 237.5L1213.8 400.2M-67.8 241.3L1212.1 404.5M-75.2 249.0L1208.7 413.3M-78.9 252.8L1207.0 417.8M-82.6 256.7L1205.3 422.2M-86.4 260.5L1203.6 426.6M-93.9 268.3L1200.1 435.6M-97.7 272.2L1198.4 440.1M-101.5 276.1L1196.6 444.6M-105.4 280.0L1194.9 449.1M-113.0 287.9L1191.4 458.3M-116.9 291.9L1189.6 462.8M-120.7 295.9L1187.8 467.4M-124.6 299.9L1186.0 472.0M-132.4 307.9L1182.4 481.3M-136.4 311.9L1180.6 486.0M-140.3 316.0L1178.8 490.7M-144.2 320.0L1177.0 495.4M-152.2 328.2L1173.3 504.8M-156.2 332.3L1171.5 509.6M-160.2 336.4L1169.7 514.4M-164.2 340.6L1167.8 519.1M-172.3 348.9L1164.1 528.8M-176.3 353.1L1162.2 533.6M-180.4 357.2L1160.3 538.5M-184.5 361.5L1158.4 543.4M-192.7 369.9L1154.6 553.2M-196.8 374.2L1152.7 558.1M-201.0 378.4L1150.8 563.1M-205.1 382.7L1148.9 568.0M-213.5 391.3L1145.0 578.0M-217.7 395.6L1143.1 583.1M-221.9 400.0L1141.1 588.1M-226.2 404.3L1139.2 593.2M-234.7 413.1L1135.2 603.4M-238.9 417.5L1133.2 608.5M-243.2 421.9L1131.2 613.7M-247.6 426.4L1129.2 618.8M-256.2 435.3L1125.2 629.2M-260.6 439.8L1123.2 634.5M-264.9 444.3L1121.2 639.7M-269.3 448.8L1119.1 645.0M-278.2 457.9L1115.0 655.6M-282.6 462.4L1113.0 660.9M-287.0 467.0L1110.9 666.2M-291.5 471.6L1108.8 671.6M-300.5 480.8L1104.7 682.4M-305.0 485.5L1102.5 687.9M-309.6 490.2L1100.4 693.3M-314.1 494.8L1098.3 698.8M-323.3 504.3L1094.1 709.8M-327.9 509.0L1091.9 715.4M-332.5 513.8L1089.8 720.9M-337.1 518.5L1087.6 726.5M-346.4 528.1L1083.2 737.8M-351.1 532.9L1081.1 743.5M-355.8 537.8L1078.9 749.1M-360.5 542.6L1076.7 754.8M-370.0 552.4L1072.2 766.3M-374.8 557.3L1070.0 772.1M-379.6 562.3L1067.7 777.9M-384.4 567.2L1065.5 783.7M-394.1 577.2L1060.9 795.4M-399.0 582.2L1058.7 801.3M-403.9 587.2L1056.4 807.3M-408.8 592.3L1054.1 813.2M-418.6 602.4L1049.5 825.2M-423.6 607.5L1047.1 831.2M-428.6 612.7L1044.8 837.2M-433.6 617.8L1042.4 843.3M-443.6 628.1L1037.7 855.5M-448.7 633.4L1035.3 861.7M-453.8 638.6L1033.0 867.8M-458.9 643.8L1030.6 874.0M-469.1 654.4L1025.7 886.5M-474.3 659.7L1023.3 892.8M-479.5 665.0L1020.9 899.1M-484.7 670.4L1018.4 905.4" stroke="#828282" stroke-width="0.5" fill="none"/>
<path d="M83.9 85.3L1281.2 225.8M67.7 101.9L1273.9 244.8M51.3 118.9L1266.4 264.1M34.6 136.0L1258.8 283.8M17.6 153.5L1251.1 303.7M0.4 171.2L1243.3 324.0M-17.2 189.3L1235.3 344.7M-35.0 207.6L1227.1 365.7M-53.1 226.2L1218.8 387.1M-71.5 245.1L1210.4 408.9M-90.2 264.4L1201.8 431.1M-109.2 284.0L1193.1 453.7M-128.5 303.9L1184.2 476.7M-148.2 324.1L1175.2 500.1M-168.2 344.7L1165.9 524.0M-188.6 365.7L1156.5 548.3M-209.3 387.0L1147.0 573.0M-230.4 408.7L1137.2 598.3M-251.9 430.8L1127.2 624.0M-273.7 453.3L1117.1 650.3M-296.0 476.2L1106.7 677.0M-318.7 499.5L1096.2 704.3M-341.8 523.3L1085.4 732.2M-365.3 547.5L1074.4 760.6M-389.3 572.2L1063.2 789.6M-413.7 597.3L1051.8 819.2M-438.6 623.0L1040.1 849.4M-464.0 649.1L1028.1 880.3M-489.9 675.7L1016.0 911.8" stroke="#6e6e6e" stroke-width="0.8" fill="none"/>
<path d="M83.9 85.3L-489.9 675.7M127.1 90.4L-436.6 684.1M170.4 95.4L-382.9 692.5M214.1 100.6L-329.0 701.0M257.9 105.7L-274.6 709.5M301.9 110.9L-220.0 718.1M346.2 116.1L-164.9 726.7M390.7 121.3L-109.5 735.4M435.4 126.5L-53.8 744.1M480.4 131.8L2.3 752.9M525.6 137.1L58.8 761.8M571.0 142.5L115.7 770.7M616.6 147.8L172.9 779.6M662.5 153.2L230.6 788.7M708.6 158.6L288.6 797.8M755.0 164.1L346.9 806.9M801.6 169.5L405.7 816.1M848.4 175.0L464.9 825.4M895.5 180.5L524.5 834.7M942.8 186.1L584.5 844.1M990.4 191.7L644.8 853.6M1038.3 197.3L705.6 863.1M1086.3 202.9L766.8 872.7M1134.7 208.6L828.5 882.4M1183.3 214.3L890.5 892.1M1232.1 220.1L953.0 901.9M1281.2 225.8L1016.0 911.8" stroke="#5e5e5e" stroke-width="1" fill="none"/>
<g transform="translate(-187.9,-40.4)"><path d="M558 120.5 L188 336" stroke="#d84a4a" stroke-width="0.7" stroke-dasharray="1.2 1.6" opacity="0.8" fill="none"/><path d="M188 331.5 L520 360" stroke="#6fc46f" stroke-width="0.6" stroke-dasharray="1 2" opacity="0.6" fill="none"/><path d="M188 447 L508 380" stroke="#5a9ad0" stroke-width="0.7" stroke-dasharray="1.2 1.8" opacity="0.7" fill="none"/><path d="M971 40 L966.5 207" stroke="#b4bcc2" stroke-width="0.8" fill="none"/><path d="M966.5 207 L958 521" stroke="#d4d4d4" stroke-width="0.8" opacity="0.85" fill="none"/><defs>
<linearGradient id="pilL" x1="0" y1="234" x2="0" y2="362" gradientUnits="userSpaceOnUse">
<stop offset="0" stop-color="#2fe070"/><stop offset="0.35" stop-color="#22d8a8"/><stop offset="0.55" stop-color="#1fb8d8"/><stop offset="0.84" stop-color="#2496d8"/><stop offset="0.9" stop-color="#28d890"/><stop offset="1" stop-color="#2fe45e"/></linearGradient>
<linearGradient id="pilR" x1="0" y1="240" x2="0" y2="378" gradientUnits="userSpaceOnUse">
<stop offset="0" stop-color="#2fe070"/><stop offset="0.3" stop-color="#22d8a8"/><stop offset="0.5" stop-color="#1fb8d8"/><stop offset="0.78" stop-color="#2496d8"/><stop offset="0.86" stop-color="#28d890"/><stop offset="1" stop-color="#2fe45e"/></linearGradient>
<linearGradient id="supL" x1="0" y1="182" x2="0" y2="250" gradientUnits="userSpaceOnUse">
<stop offset="0" stop-color="#8fc23a" stop-opacity="0.55"/><stop offset="0.8" stop-color="#80c834" stop-opacity="0.8"/><stop offset="1" stop-color="#74c832" stop-opacity="1"/></linearGradient>
<linearGradient id="legG" x1="0" y1="240" x2="0" y2="360" gradientUnits="userSpaceOnUse">
<stop offset="0" stop-color="#25d879"/><stop offset="0.25" stop-color="#22d8a0"/><stop offset="0.42" stop-color="#1fc8c8"/><stop offset="0.6" stop-color="#22d890"/><stop offset="0.72" stop-color="#1fc0d0"/><stop offset="0.86" stop-color="#25dc80"/><stop offset="1" stop-color="#2ee25a"/></linearGradient>
<radialGradient id="headG" cx="0.45" cy="0.4" r="0.7"><stop offset="0" stop-color="#1fb4d4"/><stop offset="0.7" stop-color="#1aa4d2"/><stop offset="1" stop-color="#20b8c0"/></radialGradient>
<filter id="spk" x="0" y="0" width="100%" height="100%" color-interpolation-filters="sRGB"><feTurbulence type="fractalNoise" baseFrequency="0.65" numOctaves="2" seed="3" result="n"/><feColorMatrix in="n" type="matrix" values="0 0 0 0 0.03  0 0 0 0 0.6  0 0 0 0 0.25  0 0 0 -3 1.32" result="m"/><feComposite in="m" in2="SourceGraphic" operator="in" result="k"/><feTurbulence type="fractalNoise" baseFrequency="0.6" numOctaves="2" seed="11" result="n2"/><feColorMatrix in="n2" type="matrix" values="0 0 0 0 0.45  0 0 0 0 0.88  0 0 0 0 0.2  -3 0 0 0 1.2" result="m2"/><feComposite in="m2" in2="SourceGraphic" operator="in" result="k2"/><feMerge><feMergeNode in="SourceGraphic"/><feMergeNode in="k2"/><feMergeNode in="k"/></feMerge></filter>
<filter id="bl3" x="-30%" y="-30%" width="160%" height="160%"><feGaussianBlur stdDeviation="3"/></filter><filter id="bl2" x="-30%" y="-30%" width="160%" height="160%"><feGaussianBlur stdDeviation="1.6"/></filter>
</defs>
<g filter="url(#spk)">
<path d="M521 236 L525 226 L541 180 L552 180 L550 356 L521 357Z" fill="url(#supL)"/>
<path d="M596 182 L603 183 L620 232 L619 372 L598 366Z" fill="url(#supL)"/>
<path d="M521 250 H551 V357 H521Z M596 252 H619 V372 H596Z M560 268 H590 V372 H560Z" fill="#74c832"/>
<path d="M508.8 236 L523.5 230 V364.5 H509Z" fill="url(#pilL)"/>
<path d="M618 244 L636.3 250 V378 H618Z" fill="url(#pilR)"/>
<path d="M512.5 240V362 M626 252V378 M630 252V378" stroke="#1d9a78" stroke-width="0.6" opacity="0.55" fill="none"/>
<ellipse cx="546.6" cy="367.4" rx="24" ry="10.6" fill="#2fe04a"/>
<ellipse cx="593.6" cy="372" rx="22.4" ry="13" fill="#2fe04a"/>
<g filter="url(#bl2)"><ellipse cx="552" cy="360" rx="8" ry="4" fill="#1fd0b0" opacity="0.8"/><ellipse cx="594" cy="362" rx="8" ry="4.5" fill="#1fd0b0" opacity="0.8"/></g>
<clipPath id="legc"><path d="M542.6 232 L542.6 262 L543 300 L543.3 322 L542 344 L541 357 L571 363 L563 352 L560.5 344 L562.4 322 L566 300 L571 272 L572.5 266 L574 272 L581 300 L586.7 322 L588 344 L586 356 L584 362 L606 360 L603 344 L602.8 322 L604 300 L603.5 262 L602.8 236 Z"/></clipPath>
<path d="M542.6 232 L542.6 262 L543 300 L543.3 322 L542 344 L541 357 L571 363 L563 352 L560.5 344 L562.4 322 L566 300 L571 272 L572.5 266 L574 272 L581 300 L586.7 322 L588 344 L586 356 L584 362 L606 360 L603 344 L602.8 322 L604 300 L603.5 262 L602.8 236 Z" fill="#1cdc6a"/>
<g clip-path="url(#legc)" filter="url(#bl3)"><ellipse cx="555" cy="292" rx="8" ry="20" fill="#1cc4d4" opacity="0.95"/><ellipse cx="591" cy="294" rx="8" ry="21" fill="#1cc4d4" opacity="0.95"/><ellipse cx="552" cy="333" rx="6" ry="13" fill="#1cbcd8" opacity="0.95"/><ellipse cx="595" cy="333" rx="6" ry="14" fill="#1cbcd8" opacity="0.95"/><ellipse cx="572" cy="250" rx="24" ry="10" fill="#22d49a" opacity="0.8"/></g>
<clipPath id="bodyc"><path d="M556 138.2 L542.6 139 L533.8 145.5 L528.6 155.8 L527.9 164.6 L531.2 169.5 L526 180 L522 188.5 L519 206 L514.7 219.4 L510.5 232 L508.8 248 L512 262 L519 243 L525 228 L531 216 L536.7 206 L540 194 L542.6 182 L546 194 L548.5 206 L548 219 L545 230 L542.6 240 L542.6 262 L572.5 262 L602.8 262 L602.8 238 L601.4 228 L600 206 L600.5 194 L601.4 184 L605 194 L608.7 206 L613 218 L616 228 L619 244 L624 268 L636.3 262 L635.9 251.7 L633.7 238.5 L630.5 228 L627.8 206 L622 188.5 L617.8 170 L620.5 166 L619 157.3 L614.6 150 L605.8 144.5 L595.5 143.4 L588 136 L560 137 Z"/></clipPath>
<path d="M556 138.2 L542.6 139 L533.8 145.5 L528.6 155.8 L527.9 164.6 L531.2 169.5 L526 180 L522 188.5 L519 206 L514.7 219.4 L510.5 232 L508.8 248 L512 262 L519 243 L525 228 L531 216 L536.7 206 L540 194 L542.6 182 L546 194 L548.5 206 L548 219 L545 230 L542.6 240 L542.6 262 L572.5 262 L602.8 262 L602.8 238 L601.4 228 L600 206 L600.5 194 L601.4 184 L605 194 L608.7 206 L613 218 L616 228 L619 244 L624 268 L636.3 262 L635.9 251.7 L633.7 238.5 L630.5 228 L627.8 206 L622 188.5 L617.8 170 L620.5 166 L619 157.3 L614.6 150 L605.8 144.5 L595.5 143.4 L588 136 L560 137 Z" fill="#14d970"/>
<path d="M539 160 Q540 172 542.6 182 M606.5 162 Q604 174 601.4 184" stroke="#0c9a58" stroke-width="1.6" fill="none" opacity="0.55" filter="url(#bl2)"/>
<g clip-path="url(#bodyc)"><g filter="url(#bl3)" opacity="0.75"><ellipse cx="523" cy="212" rx="6" ry="22" fill="#16d4a0" transform="rotate(18 523 212)"/><ellipse cx="627" cy="215" rx="6" ry="24" fill="#16d4a0" transform="rotate(-10 627 215)"/></g></g>
<g clip-path="url(#bodyc)"><path d="M550 160 Q572 150 598 162 Q601 185 597 205 Q572 215 551 205 Q547 182 550 160Z" fill="#6fd832" opacity="0.3" filter="url(#bl3)"/><ellipse cx="574" cy="186" rx="9" ry="14" fill="#1fd0a0" opacity="0.55" filter="url(#bl3)"/></g>
<g clip-path="url(#bodyc)"><ellipse cx="572" cy="226" rx="22" ry="13" fill="#1fcfb4" opacity="0.75" filter="url(#bl3)"/></g>
<path d="M560.5 150 L559.2 140 L558.8 128 L559.5 117.6 L564.6 112.5 L572 111 L580 112 L585.2 116 L588.1 122.8 L587.8 128 L585.2 134.5 L594 140.4 L596 145 L588 150 L580 153 L566 153Z" fill="url(#headG)"/>
<path d="M554 141 L560 138 L562 152 L556 150Z" fill="#22c8b0" opacity="0.8"/>
</g>
<path d="M572.6 268V364" stroke="#1432c8" stroke-width="1.3"/><path d="M634 373.6 L737.2 386.6" stroke="#e8281e" stroke-width="1.2" fill="none"/><path d="M750.5 393.4 L789.5 388.4 M757.5 384.2 L783.7 397.7" stroke="#e8281e" stroke-width="1.1" fill="none"/><path d="M636 283 L644 280.5" stroke="#3fd03f" stroke-width="1.1" fill="none"/></g>
</svg>
<div class="a" style="left:186.9px;top:39.4px;width:804.6px;height:482.3px;border:1px solid #f8f7f1;border-top-color:#b4bcc0;border-left-color:#c4cacc"></div>
<div class="t " style="left:195px;top:48.1px;">Speed (mm/min)</div>
<div class="a" style="left:195.5px;top:60.0px;width:14px;height:12.9px;background:#cd3430;border-top:0.5px solid rgba(0,0,0,.25)"></div>
<div class="t sans" style="left:213.5px;top:62.2px;font-size:7.7px;color:#111">11200</div>
<div class="a" style="left:195.5px;top:72.8px;width:14px;height:12.9px;background:#d46c34;border-top:0.5px solid rgba(0,0,0,.25)"></div>
<div class="t sans" style="left:213.5px;top:75.0px;font-size:7.7px;color:#111">10110</div>
<div class="a" style="left:195.5px;top:85.6px;width:14px;height:12.9px;background:#d4a236;border-top:0.5px solid rgba(0,0,0,.25)"></div>
<div class="t sans" style="left:213.5px;top:87.8px;font-size:7.7px;color:#111">9020</div>
<div class="a" style="left:195.5px;top:98.4px;width:14px;height:12.9px;background:#cdc83a;border-top:0.5px solid rgba(0,0,0,.25)"></div>
<div class="t sans" style="left:213.5px;top:100.6px;font-size:7.7px;color:#111">7930</div>
<div class="a" style="left:195.5px;top:111.2px;width:14px;height:12.9px;background:#93c836;border-top:0.5px solid rgba(0,0,0,.25)"></div>
<div class="t sans" style="left:213.5px;top:113.4px;font-size:7.7px;color:#111">6840</div>
<div class="a" style="left:195.5px;top:124.0px;width:14px;height:12.9px;background:#52c636;border-top:0.5px solid rgba(0,0,0,.25)"></div>
<div class="t sans" style="left:213.5px;top:126.2px;font-size:7.7px;color:#111">5750</div>
<div class="a" style="left:195.5px;top:136.8px;width:14px;height:12.9px;background:#32c248;border-top:0.5px solid rgba(0,0,0,.25)"></div>
<div class="t sans" style="left:213.5px;top:139.0px;font-size:7.7px;color:#111">4660</div>
<div class="a" style="left:195.5px;top:149.6px;width:14px;height:12.9px;background:#32c27e;border-top:0.5px solid rgba(0,0,0,.25)"></div>
<div class="t sans" style="left:213.5px;top:151.8px;font-size:7.7px;color:#111">3570</div>
<div class="a" style="left:195.5px;top:162.4px;width:14px;height:12.9px;background:#2ebca8;border-top:0.5px solid rgba(0,0,0,.25)"></div>
<div class="t sans" style="left:213.5px;top:164.6px;font-size:7.7px;color:#111">2480</div>
<div class="a" style="left:195.5px;top:175.2px;width:14px;height:12.9px;background:#2da6c6;border-top:0.5px solid rgba(0,0,0,.25)"></div>
<div class="t sans" style="left:213.5px;top:177.4px;font-size:7.7px;color:#111">1390</div>
<div class="a" style="left:195.5px;top:188.0px;width:14px;height:12.9px;background:#2e74c4;border-top:0.5px solid rgba(0,0,0,.25)"></div>
<div class="t sans" style="left:213.5px;top:190.2px;font-size:7.7px;color:#111">300</div>
<div class="t " style="left:563px;top:48.1px;">Preview Mode</div>
</body></html>
